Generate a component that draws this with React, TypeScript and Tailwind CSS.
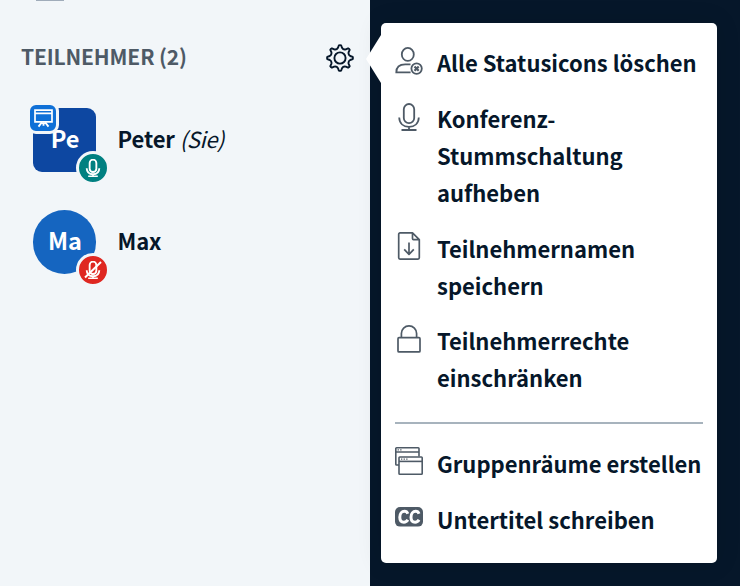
import React from "react";
import type { ReactNode } from "react";

const Gear = () => (
  <svg className="h-7 w-7" viewBox="-14 -14 28 28" fill="none" stroke="#06172a" strokeWidth="1.9" strokeLinejoin="round">
    <circle r="5.6" />
    <path d="M-1.100-12.700Q0-13.100 1.100-12.700L2-10.200Q3.300-8 5.800-8.630L8.130-9.700Q9.300-9.300 9.700-8.130L8.630-5.800Q8-3.300 10.200-2L12.700-1.100Q13.100 0 12.700 1.100L10.200 2Q8 3.300 8.630 5.800L9.700 8.130Q9.300 9.300 8.130 9.700L5.800 8.630Q3.300 8 2 10.200L1.100 12.700Q0 13.100-1.100 12.700L-2 10.200Q-3.300 8-5.800 8.630L-8.130 9.700Q-9.300 9.300-9.700 8.130L-8.630 5.800Q-8 3.300-10.200 2L-12.700 1.100Q-13.100 0-12.700-1.100L-10.200-2Q-8-3.300-8.630-5.800L-9.700-8.130Q-9.300-9.300-8.130-9.700L-5.800-8.630Q-3.300-8-2-10.200z" />
  </svg>
);

const UserOff = () => (
  <svg className="h-7 w-7" viewBox="0 0 28 28" fill="none" stroke="#4e5a66" strokeWidth="1.8">
    <ellipse cx="12.8" cy="7.4" rx="6" ry="6.5" />
    <path d="M15.6 25.4H1.300c0-4.800 3-8 8.900-8h5.3" />
    <circle cx="21.6" cy="21.6" r="5.2" />
    <path d="m19.500 19.500 4.200 4.200m0-4.200-4.200 4.200" strokeWidth="2.200" />
  </svg>
);

const Mic = ({ className }: { className: string }) => (
  <svg className={className} viewBox="0 0 28 28" fill="none" stroke="currentColor">
    <rect x="8.8" y="1" width="10.4" height="19.2" rx="5.2" />
    <path d="M4.200 14.500c.2 5.800 4.200 9.300 9.800 9.300s9.600-3.500 9.800-9.300M14 23.800V27M6.500 27h15" />
  </svg>
);

const FileDown = () => (
  <svg className="h-7 w-7" viewBox="0 0 28 28" fill="none" stroke="#4e5a66" strokeWidth="1.700" strokeLinejoin="round">
    <path d="M17.500.9H5a1.300 1.300 0 0 0-1.300 1.300v23.600A1.300 1.300 0 0 0 5 27.100h18a1.300 1.300 0 0 0 1.300-1.300V7.600zM17.500.9v5.700a1 1 0 0 0 1 1h5.800" />
    <path d="M14 10.500v11.700M9.200 17.300l4.800 5 4.800-5" />
  </svg>
);

const Lock = () => (
  <svg className="h-7 w-7" viewBox="0 0 28 28" fill="none" stroke="#4e5a66" strokeWidth="1.700">
    <rect x="3" y="12.700" width="22" height="14.200" rx="1" />
    <path d="M6.400 12.700V8.500a7.600 7.600 0 0 1 15.200 0v4.200" />
  </svg>
);

const Rooms = () => (
  <svg className="h-7 w-7" viewBox="0 0 28 28" fill="none" stroke="#4e5a66" strokeWidth="1.600">
    <path d="M4 18H1.600a.8.800 0 0 1-.8-.8V1.600a.8.800 0 0 1 .8-.8h21.600a.8.800 0 0 1 .8.800V9.500M.8 5h23.200" />
    <rect x="4" y="10" width="23.200" height="17.200" rx=".8" />
    <path d="M4 14.400h23.300" />
    <path d="M2.600 2.900h5M6 12.200h7.500" strokeDasharray="1.300 1.300" strokeWidth="1.300" />
  </svg>
);

const Captions = () => (
  <svg className="h-7 w-7" viewBox="0 0 28 28" fill="none">
    <rect x="0" y="4" width="28" height="19.600" rx="5" fill="#4e5a66" />
    <path d="M12.800 10.700c-.6-1.600-1.700-2.400-3.300-2.400-2.700 0-4.700 2.500-4.700 5.900 0 3.100 1.600 5 4.100 5 1.700 0 3-.8 3.900-2.400M24 10.700c-.6-1.600-1.700-2.400-3.300-2.400-2.700 0-4.700 2.500-4.700 5.900 0 3.100 1.600 5 4.100 5 1.700 0 3-.8 3.900-2.400" stroke="#fff" strokeWidth="3" />
  </svg>
);

const Presentation = () => (
  <svg className="h-[19px] w-[19px]" viewBox="0 0 19 19" fill="none" stroke="#fff" strokeWidth="1.700">
    <path d="M1 1.200h17v11.600H1zM1 4.300h17" />
    <path d="M8 13.200 4.500 17.600M11 13.200l3.500 4.400M9.500 13.200v3.600" strokeWidth="1.900" />
  </svg>
);

type ItemProps = { icon: ReactNode; children: ReactNode };

const MenuItem = ({ icon, children }: ItemProps) => (
  <li className="flex items-start gap-[14px]">
    <span className="mt-[2.5px] shrink-0 text-[#4e5a66]">{icon}</span>
    <span className="whitespace-nowrap leading-[37px]">{children}</span>
  </li>
);

const App = () => {
  return (
    <div className="flex h-[586px] w-[740px] overflow-hidden bg-[#06172a] font-['Noto_Sans_CJK_SC',sans-serif] text-[22px] font-semibold text-[#06172a]">
      <aside className="w-[370px] shrink-0 bg-[#f2f6f9]">
        <div className="ml-9 h-[1px] w-7 bg-[#a0acba]" />
        <header className="mt-[38px] flex h-[37px] items-center justify-between pl-[21px] pr-4">
          <h2 className="pb-[2px] text-[21px] tracking-[-0.15px] text-[#4e5a66]">TEILNEHMER (2)</h2>
          <Gear />
        </header>
        <ul className="mt-8 pl-[33px]">
          <li className="flex h-16 items-center gap-[21.5px]">
            <div className="relative flex h-16 w-[63px] items-center justify-center rounded-[9px] bg-[#0d47a1] pb-[3px] pl-[1px] text-[23.5px] font-bold text-white">
              Pe
              <span className="absolute -left-[6px] -top-[6px] flex h-[32px] w-[32px] items-center justify-center rounded-[9px] border-3 border-[#f2f6f9] bg-[#0f70d7]">
                <Presentation />
              </span>
              <span className="absolute -bottom-[13px] -right-[14px] flex h-[34px] w-[34px] items-center justify-center rounded-full border-3 border-[#f2f6f9] bg-[#008081] pb-[1px]">
                <Mic className="h-[18px] w-[18px] stroke-[2.900]" />
              </span>
            </div>
            <span className="pb-[3px] tracking-[-0.1px]">
              Peter <em className="font-normal tracking-[-0.4px]">(Sie)</em>
            </span>
          </li>
          <li className="mt-[38px] flex h-16 items-center gap-[21.5px]">
            <div className="relative flex h-16 w-[63px] items-center justify-center rounded-full bg-[#1565c0] pb-[3px] pl-[1px] text-[23.5px] font-bold text-white">
              Ma
              <span className="absolute -bottom-[13px] -right-[14px] flex h-[34px] w-[34px] items-center justify-center rounded-full border-3 border-[#f2f6f9] bg-[#df2721] pb-[1px]">
                <Mic className="h-[18px] w-[18px] stroke-[2.900]" />
                <svg className="absolute h-7 w-7" viewBox="0 0 28 28" stroke="#fff" strokeWidth="2">
                  <path d="M6 21.500 22 6" />
                </svg>
              </span>
            </div>
            <span className="pb-[3px] tracking-[-0.1px]">Max</span>
          </li>
        </ul>
      </aside>
      <div className="relative ml-[11px] mt-[23px] h-[540px] w-[336px] rounded-[5px] bg-white px-[14px] pt-[21px] shadow-[0_0_24px_rgba(0,0,0,0.12)]">
        <svg className="absolute -left-[15px] top-3 h-12 w-4" viewBox="0 0 16 48" fill="#fff">
          <path d="M16 0v48h-1L0 24 15 0z" />
        </svg>
        <ul className="flex flex-col gap-[18.8px]">
          <MenuItem icon={<UserOff />}>Alle Statusicons löschen</MenuItem>
          <MenuItem icon={<Mic className="mt-[3.5px] h-7 w-7 stroke-[1.800] -mb-[3.5px] -translate-y-[3px]" />}>
            Konferenz-
            <br />
            Stummschaltung
            <br />
            aufheben
          </MenuItem>
          <MenuItem icon={<FileDown />}>
            Teilnehmernamen
            <br />
            speichern
          </MenuItem>
          <MenuItem icon={<Lock />}>
            Teilnehmerrechte
            <br />
            einschränken
          </MenuItem>
        </ul>
        <hr className="mb-[21px] mt-[25.6px] border-t-2 border-[#a7b3bd]" />
        <ul className="flex flex-col gap-[18.8px]">
          <MenuItem icon={<Rooms />}>Gruppenräume erstellen</MenuItem>
          <MenuItem icon={<Captions />}>Untertitel schreiben</MenuItem>
        </ul>
      </div>
    </div>
  );
};

export default App;
